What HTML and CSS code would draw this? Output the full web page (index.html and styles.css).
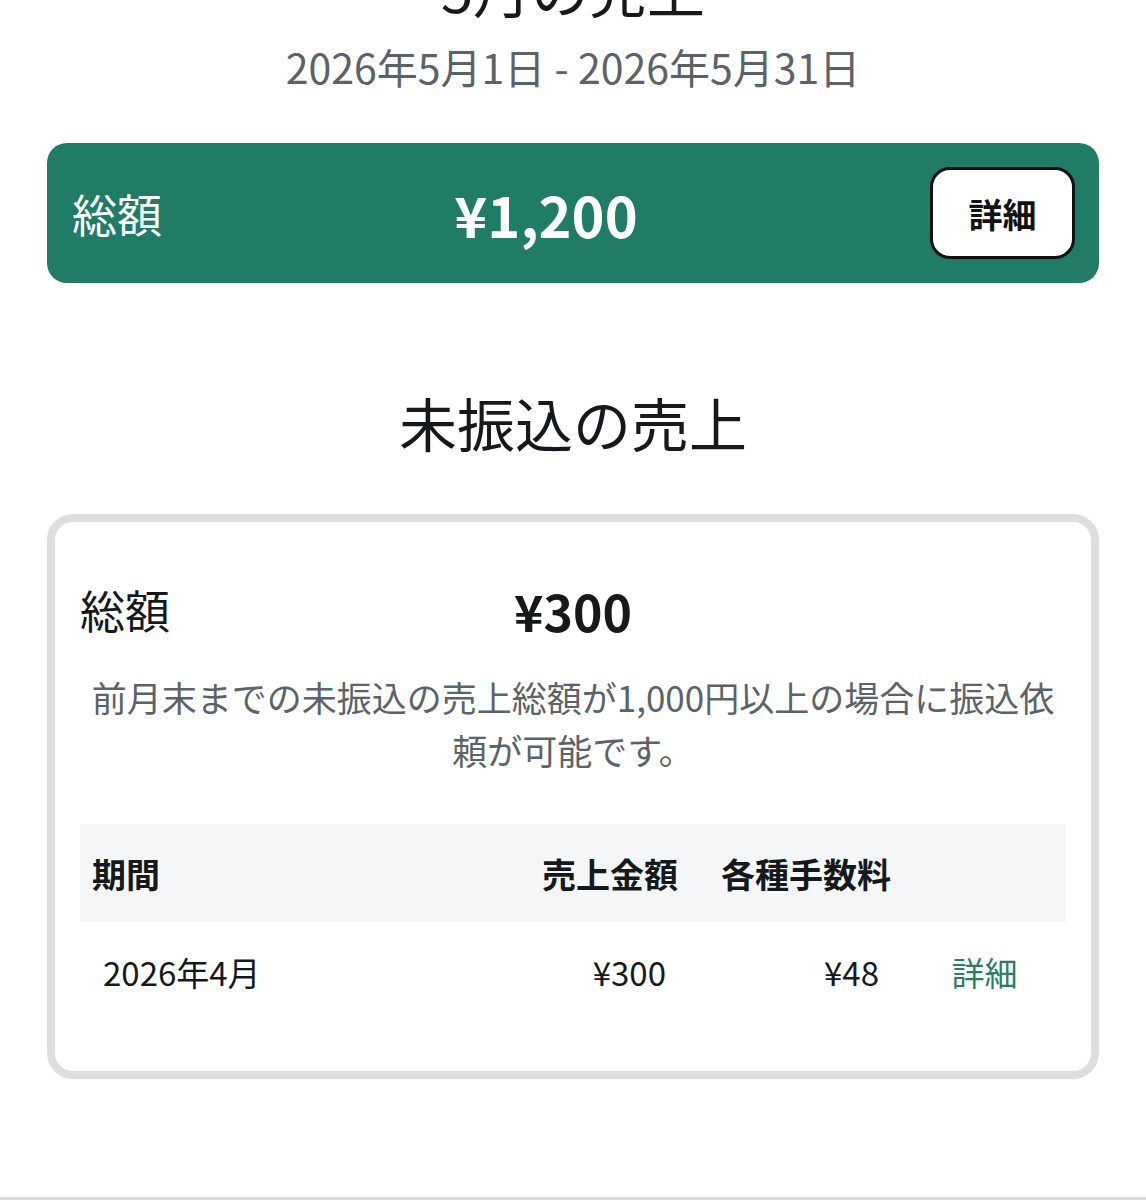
FILE: index.html
```html
<!DOCTYPE html>
<html lang="ja">
  <head>
    <meta charset="UTF-8" />
    <meta name="viewport" content="width=device-width, initial-scale=1.0" />
    <title>売上</title>
    <link rel="stylesheet" href="styles.css">
  </head>
  <body>
    <div class="page">
      <h1 class="month-title">5月の売上</h1>
      <div class="period">2026年5月1日 - 2026年5月31日</div>

      <div class="summary-bar">
        <span class="summary-label">総額</span>
        <span class="summary-amount">¥1,200</span>
        <button class="detail-button">詳細</button>
      </div>

      <h2 class="section-title">未振込の売上</h2>

      <div class="card">
        <div class="card-total">
          <span class="card-label">総額</span>
          <span class="card-amount">¥300</span>
          <span></span>
        </div>
        <p class="note">前月末までの未振込の売上総額が1,000円以上の場合に振込依頼が可能です。</p>

        <table class="sales-table">
          <colgroup>
            <col class="w-period">
            <col class="w-sales">
            <col class="w-fee">
            <col class="w-link">
          </colgroup>
          <thead>
            <tr>
              <th>期間</th>
              <th class="col-num">売上金額</th>
              <th class="col-num">各種手数料</th>
              <th></th>
            </tr>
          </thead>
          <tbody>
            <tr>
              <td>2026年4月</td>
              <td class="col-num">¥300</td>
              <td class="col-num">¥48</td>
              <td class="col-link"><a href="#">詳細</a></td>
            </tr>
          </tbody>
        </table>
      </div>
    </div>
    <div class="tabbar"></div>
  </body>
</html>
```

FILE: styles.css
```css
body {
  margin: 0;
  background-color: white;
  font-family: "Noto Sans CJK JP", "Liberation Sans", sans-serif;
  color: #16191c;
  overflow: hidden;
}

.page {
  padding: 0 47px;
}

.month-title {
  margin: -47px 0 0;
  font-size: 58px;
  font-weight: 400;
  line-height: 70px;
  text-align: center;
}

.period {
  margin-top: 18px;
  font-size: 41px;
  line-height: 50px;
  color: #5d6268;
  text-align: center;
}

.summary-bar {
  display: flex;
  align-items: center;
  height: 140px;
  margin-top: 52px;
  padding: 0 24px 0 25px;
  border-radius: 20px;
  background-color: #207b67;
  color: white;
}

.summary-label {
  font-size: 45px;
}

.summary-amount {
  flex: 1;
  text-align: center;
  font-size: 56px;
  font-weight: bold;
}

.detail-button {
  width: 145px;
  height: 92px;
  border: 3px solid #111;
  border-radius: 20px;
  background: white;
  color: #111;
  font-family: inherit;
  font-size: 34px;
  font-weight: bold;
  cursor: pointer;
}

.section-title {
  margin: 104px 0 0;
  font-size: 58px;
  font-weight: 400;
  line-height: 70px;
  text-align: center;
}

.card {
  margin-top: 57px;
  padding: 58px 25px 49px 25px;
  border: 8px solid #dcdee0;
  border-radius: 26px;
}

.card-total {
  display: grid;
  grid-template-columns: 1fr auto 1fr;
  align-items: center;
  line-height: 60px;
}

.card-label {
  font-size: 45px;
}

.card-amount {
  font-size: 50px;
  font-weight: bold;
}

.note {
  margin: 30px 0 0;
  font-size: 35px;
  line-height: 53px;
  color: #5d6268;
  text-align: center;
}

.sales-table {
  width: 100%;
  margin-top: 48px;
  border-collapse: collapse;
  table-layout: fixed;
}

.w-sales {
  width: 164px;
}

.w-fee {
  width: 213px;
}

.w-link {
  width: 163px;
}

.sales-table th {
  height: 98px;
  padding: 0 12px;
  background-color: #f4f6f8;
  font-size: 34px;
  font-weight: bold;
  text-align: left;
  white-space: nowrap;
}

.sales-table td {
  height: 100px;
  padding: 0 23px;
  font-size: 33px;
  white-space: nowrap;
}

.sales-table .col-num {
  text-align: right;
}

.sales-table td.col-num {
  padding-right: 24px;
}

.sales-table .col-link {
  padding: 0;
  text-align: center;
}

.col-link a {
  color: #2a7d6a;
  text-decoration: none;
}

.tabbar {
  margin-top: 118px;
  border-top: 3px solid #d8d8d8;
  height: 60px;
}
```
